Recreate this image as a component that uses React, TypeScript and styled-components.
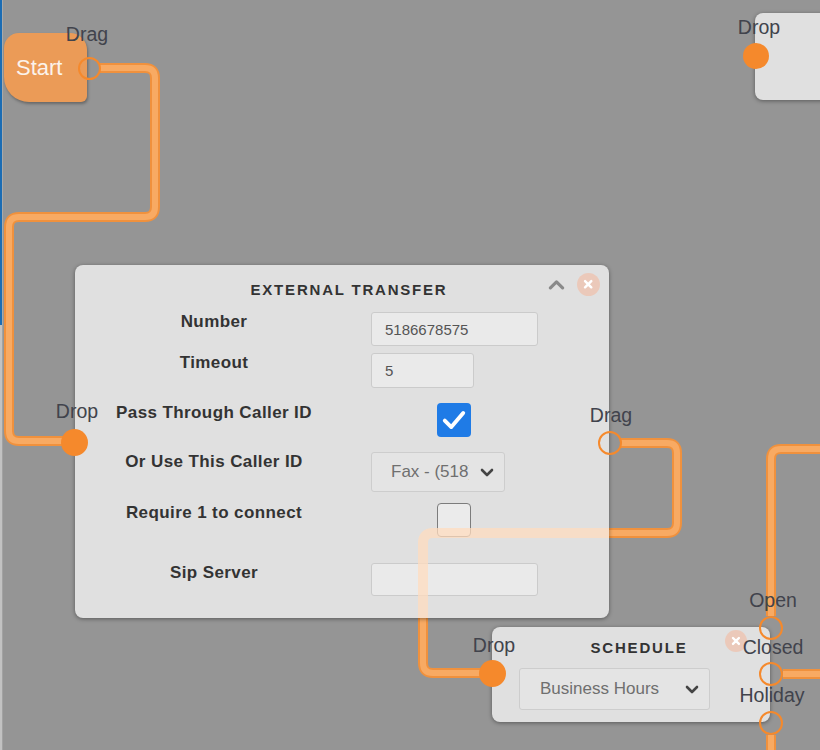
import React from 'react';
import styled, { createGlobalStyle } from 'styled-components';

// the canvas starts right of the sidebar edge; all node coordinates below are page coordinates
const EDGE = 3;

const GlobalStyle = createGlobalStyle`
  *, *::before, *::after { box-sizing: border-box; }
  html, body { margin: 0; padding: 0; overflow: hidden; }
  body { font-family: "Liberation Sans", Arial, sans-serif; }
`;

const Page = styled.div`
  display: flex;
  width: 820px;
  height: 750px;
  overflow: hidden;
`;

const SidebarEdge = styled.div`
  display: flex;
  flex-direction: column;
  flex: none;
  width: ${EDGE}px;
`;

const EdgeTop = styled.div`
  height: 325px;
  background: #1b6cb3;
  border-right: 1px solid #a9a9a9;
`;

const EdgeBottom = styled.div`
  flex: 1;
  background: #c2c2c2;
  border-right: 1px solid #a2a2a2;
`;

const Canvas = styled.div`
  position: relative;
  flex: 1;
  background: #959595;
  overflow: hidden;
`;

const WireLayer = styled.svg<{ $z: number }>`
  position: absolute;
  left: 0;
  top: 0;
  width: ${820 - EDGE}px;
  height: 750px;
  z-index: ${p => p.$z};
  pointer-events: none;
`;

type Box = { $x: number; $y: number; $w: number; $h: number };

const Node = styled.div<Box>`
  position: absolute;
  left: ${p => p.$x - EDGE}px;
  top: ${p => p.$y}px;
  width: ${p => p.$w}px;
  height: ${p => p.$h}px;
  background: #e0e0e0;
  border-radius: 8px;
  box-shadow: 0 1px 4px rgba(0, 0, 0, 0.4);
  z-index: 1;
`;

const StartNode = styled(Node)`
  display: flex;
  align-items: center;
  padding-left: 12px;
  background: #eb9b57;
  border-radius: 15px 17px 6px 25px;
  box-shadow: 1px 2px 3px rgba(0, 0, 0, 0.3);
  color: #fbf3ec;
  font-size: 22px;
`;

const FormNode = styled(Node)`
  padding-top: 16px;
`;

const ScheduleNode = styled(Node)`
  padding-top: 12px;
`;

const Title = styled.div<{ $shift: number }>`
  padding-left: ${p => p.$shift * 2}px;
  text-align: center;
  font-size: 15px;
  line-height: 18px;
  font-weight: bold;
  letter-spacing: 1.8px;
  color: #333;
`;

const HeaderControls = styled.div<{ $top: number; $right: number }>`
  position: absolute;
  top: ${p => p.$top}px;
  right: ${p => p.$right}px;
  display: flex;
  align-items: center;
  gap: 12px;
`;

const FormGrid = styled.div`
  display: grid;
  grid-template-columns: 278px 1fr;
  grid-template-rows: 41px 50px 49px 51px 60px 34px;
  margin-top: 13px;
`;

const Label = styled.div`
  text-align: center;
  font-size: 17px;
  line-height: 20px;
  font-weight: bold;
  letter-spacing: 0.4px;
  color: #333;
`;

const Field = styled.div`
  padding-left: 18px;
`;

const TextInput = styled.input<{ $w: number; $h: number }>`
  display: block;
  width: ${p => p.$w}px;
  height: ${p => p.$h}px;
  padding: 0 13px;
  border: 1px solid #cbcbcb;
  border-radius: 3px;
  background: #eaeaea;
  font-family: "Liberation Sans", Arial, sans-serif;
  font-size: 15px;
  color: #555;
  outline: none;
`;

const Checkbox = styled.div<{ $checked: boolean }>`
  display: flex;
  align-items: center;
  justify-content: center;
  width: 34px;
  height: 34px;
  margin-left: 66px;
  border-radius: 4px;
  background: ${p => (p.$checked ? '#1f7be6' : '#ebebeb')};
  border: ${p => (p.$checked ? 'none' : '1.5px solid #7c7c7c')};
`;

const SelectBox = styled.div<{ $w: number; $h: number }>`
  display: flex;
  align-items: center;
  width: ${p => p.$w}px;
  height: ${p => p.$h}px;
  padding: 0 10px 0 19px;
  border: 1px solid #cdcdcd;
  border-radius: 3px;
  background: #e4e4e4;
`;

const SelectText = styled.span<{ $clip?: number }>`
  flex: ${p => (p.$clip ? 'none' : '1')};
  width: ${p => (p.$clip ? `${p.$clip}px` : 'auto')};
  overflow: hidden;
  white-space: nowrap;
  font-size: 17px;
  color: #6f6f6f;
`;

const ScheduleSelect = styled(SelectBox)`
  margin: 11px 0 0 27px;
  padding-left: 20px;
`;

const Spacer = styled.span`
  flex: 1;
`;

const CloseButton = styled.div<{ $size: number }>`
  display: flex;
  align-items: center;
  justify-content: center;
  width: ${p => p.$size}px;
  height: ${p => p.$size}px;
  border-radius: 50%;
  background: #ebc9ba;
`;

const Port = styled.div<{ $x: number; $y: number; $size: number; $filled: boolean }>`
  position: absolute;
  left: ${p => p.$x - EDGE - p.$size / 2}px;
  top: ${p => p.$y - p.$size / 2}px;
  width: ${p => p.$size}px;
  height: ${p => p.$size}px;
  border-radius: 50%;
  background: ${p => (p.$filled ? '#f5892c' : 'transparent')};
  border: ${p => (p.$filled ? 'none' : '2.5px solid #f5892c')};
  z-index: 3;
`;

const PortLabel = styled.div<{ $x: number; $y: number }>`
  position: absolute;
  left: ${p => p.$x - EDGE}px;
  top: ${p => p.$y}px;
  transform: translateX(-50%);
  font-size: 19.5px;
  line-height: 19px;
  color: #41434c;
  white-space: nowrap;
  z-index: 3;
`;

const Chevron = ({ up, color, w }: { up?: boolean; color: string; w: number }) => (
  <svg width={w} height={w / 2 + 2} viewBox="0 0 14 8">
    <path
      d={up ? 'M2 7 L7 2 L12 7' : 'M2 1.5 L7 6.5 L12 1.5'}
      fill="none"
      stroke={color}
      strokeWidth={2.6}
      strokeLinecap="round"
      strokeLinejoin="round"
    />
  </svg>
);

const CloseIcon = ({ size }: { size: number }) => (
  <CloseButton $size={size}>
    <svg width={size * 0.45} height={size * 0.45} viewBox="0 0 10 10">
      <path d="M2 2 L8 8 M8 2 L2 8" stroke="#fff" strokeWidth={2.4} strokeLinecap="round" />
    </svg>
  </CloseButton>
);

const CheckMark = () => (
  <svg width="26" height="24" viewBox="0 0 24 22">
    <path d="M3.5 11.5 L9.5 17.5 L20.5 4.5" fill="none" stroke="#fff" strokeWidth={3.6} strokeLinecap="round" strokeLinejoin="round" />
  </svg>
);

// connector routes, page coordinates
const wires = {
  startToTransfer: 'M 99 68 H 145 Q 155 68 155 78 V 207 Q 155 217 145 217 H 19 Q 9 217 9 227 V 431 Q 9 441 19 441 H 74',
  transferToSchedule: 'M 620 443 H 667 Q 677 443 677 453 V 523 Q 677 533 667 533 H 433 Q 423 533 423 543 V 663 Q 423 673 433 673 H 491',
  intoOpen: 'M 820 449 H 781 Q 771 449 771 459 V 616',
  fromClosed: 'M 783 674 H 820',
  fromHoliday: 'M 771 735 V 760',
};

const ports = [
  { x: 89, y: 68, size: 23, filled: false },
  { x: 756, y: 56, size: 26, filled: true },
  { x: 74, y: 442, size: 27, filled: true },
  { x: 610, y: 443, size: 24, filled: false },
  { x: 492, y: 673, size: 27, filled: true },
  { x: 771, y: 628, size: 24, filled: false },
  { x: 771, y: 674, size: 24, filled: false },
  { x: 771, y: 723, size: 24, filled: false },
];

const labels = [
  { text: 'Drag', x: 87, y: 25 },
  { text: 'Drop', x: 759, y: 18 },
  { text: 'Drop', x: 77, y: 402 },
  { text: 'Drag', x: 611, y: 406 },
  { text: 'Drop', x: 494, y: 636 },
  { text: 'Open', x: 773, y: 591 },
  { text: 'Closed', x: 773, y: 638 },
  { text: 'Holiday', x: 772, y: 686 },
];

const Wire = ({ d }: { d: string }) => (
  <g fill="none" strokeLinecap="butt">
    <path d={d} stroke="#f0913d" strokeWidth={10} />
    <path d={d} stroke="#f8aa63" strokeWidth={6} />
  </g>
);

export default function App() {
  const viewBox = `${EDGE} 0 ${820 - EDGE} 750`;
  return (
    <>
      <GlobalStyle />
      <Page>
        <SidebarEdge>
          <EdgeTop />
          <EdgeBottom />
        </SidebarEdge>
        <Canvas>
          <WireLayer $z={0} viewBox={viewBox}>
            {Object.values(wires).map(d => (
              <Wire key={d} d={d} />
            ))}
          </WireLayer>

          <StartNode $x={4} $y={33} $w={83} $h={69}>Start</StartNode>

          <Node $x={755} $y={13} $w={90} $h={87} />

          <FormNode $x={75} $y={265} $w={534} $h={353}>
            <Title $shift={7}>EXTERNAL TRANSFER</Title>
            <HeaderControls $top={8} $right={9}>
              <Chevron up color="#8a8a8a" w={17} />
              <CloseIcon size={23} />
            </HeaderControls>
            <FormGrid>
              <Label>Number</Label>
              <Field>
                <TextInput $w={167} $h={34} value="5186678575" readOnly />
              </Field>
              <Label>Timeout</Label>
              <Field>
                <TextInput $w={103} $h={35} value="5" readOnly />
              </Field>
              <Label>Pass Through Caller ID</Label>
              <Field>
                <Checkbox $checked>
                  <CheckMark />
                </Checkbox>
              </Field>
              <Label>Or Use This Caller ID</Label>
              <Field>
                <SelectBox $w={134} $h={40}>
                  <SelectText $clip={78}>Fax - (518) 667-8575</SelectText>
                  <Spacer />
                  <Chevron color="#444" w={14} />
                </SelectBox>
              </Field>
              <Label>Require 1 to connect</Label>
              <Field>
                <Checkbox $checked={false} />
              </Field>
              <Label>Sip Server</Label>
              <Field>
                <TextInput $w={167} $h={33} value="" readOnly />
              </Field>
            </FormGrid>
          </FormNode>

          <ScheduleNode $x={492} $y={627} $w={278} $h={95}>
            <Title $shift={8}>SCHEDULE</Title>
            <HeaderControls $top={3} $right={23}>
              <CloseIcon size={22} />
            </HeaderControls>
            <ScheduleSelect $w={191} $h={42}>
              <SelectText>Business Hours</SelectText>
              <Chevron color="#444" w={14} />
            </ScheduleSelect>
          </ScheduleNode>

          {/* the wire that runs behind the transfer form still shows faintly through it */}
          <WireLayer $z={2} viewBox={viewBox}>
            <defs>
              <clipPath id="transferClip">
                <rect x={75} y={265} width={534} height={353} rx={8} />
              </clipPath>
            </defs>
            <path
              d={wires.transferToSchedule}
              clipPath="url(#transferClip)"
              fill="none"
              stroke="#ffdcbf"
              strokeWidth={10}
              opacity={0.75}
            />
          </WireLayer>

          {ports.map((p, i) => (
            <Port key={i} $x={p.x} $y={p.y} $size={p.size} $filled={p.filled} />
          ))}
          {labels.map((l, i) => (
            <PortLabel key={i} $x={l.x} $y={l.y}>
              {l.text}
            </PortLabel>
          ))}
        </Canvas>
      </Page>
    </>
  );
}
